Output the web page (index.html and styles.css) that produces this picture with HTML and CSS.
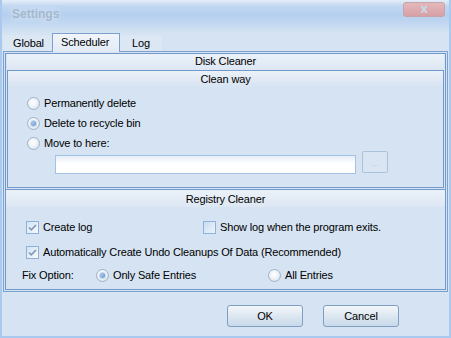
FILE: index.html
```html
<!DOCTYPE html>
<html lang="en">
<head>
    <meta charset="UTF-8">
    <title>Settings</title>
    <link rel="stylesheet" href="styles.css">
</head>
<body>

<div class="window">
    <div class="titlebar">
        <span class="title">Settings</span>
        <span class="close-btn">x</span>
    </div>

    <div class="tabs">
        <span class="tab tab-global">Global</span>
        <span class="tab tab-active">Scheduler</span>
        <span class="tab tab-log">Log</span>
    </div>

    <div class="tab-panel">
        <div class="group disk-group">
            <div class="group-header">Disk Cleaner</div>
            <div class="subgroup">
                <div class="group-header sub-header">Clean way</div>
                <div class="clean-body">
                    <div class="row">
                        <span class="radio"></span>
                        <span class="label">Permanently delete</span>
                    </div>
                    <div class="row">
                        <span class="radio checked"></span>
                        <span class="label">Delete to recycle bin</span>
                    </div>
                    <div class="row">
                        <span class="radio"></span>
                        <span class="label">Move to here:</span>
                    </div>
                    <div class="path-row">
                        <span class="path-input"></span>
                        <span class="browse-btn">...</span>
                    </div>
                </div>
            </div>
        </div>

        <div class="group registry-group">
            <div class="group-header">Registry Cleaner</div>
            <div class="registry-body">
                <div class="row check-row">
                    <span class="cell-first">
                        <span class="checkbox">
                            <svg width="11" height="11" viewBox="0 0 11 11"><path d="M2 5.5 L4.3 7.8 L9 3" fill="none" stroke="#7f98b4" stroke-width="1.6"/></svg>
                        </span>
                        <span class="label">Create log</span>
                    </span>
                    <span class="checkbox empty"></span>
                    <span class="label">Show log when the program exits.</span>
                </div>
                <div class="row check-row row-second">
                    <span class="checkbox">
                        <svg width="11" height="11" viewBox="0 0 11 11"><path d="M2 5.5 L4.3 7.8 L9 3" fill="none" stroke="#7f98b4" stroke-width="1.6"/></svg>
                    </span>
                    <span class="label">Automatically Create Undo Cleanups Of Data (Recommended)</span>
                </div>
                <div class="row fix-row">
                    <span class="fix-label">Fix Option:</span>
                    <span class="fix-option">
                        <span class="radio checked"></span>
                        <span class="label">Only Safe Entries</span>
                    </span>
                    <span class="radio"></span>
                    <span class="label">All Entries</span>
                </div>
            </div>
        </div>
    </div>

    <div class="buttons">
        <span class="button">OK</span>
        <span class="button">Cancel</span>
    </div>
</div>

</body>
</html>
```

FILE: styles.css
```css
body {
    margin: 0;
    font-family: 'Liberation Sans', Arial, sans-serif;
    font-size: 11px;
    letter-spacing: -0.15px;
    color: #000;
    background: #d5e3f2;
}

.window {
    width: 451px;
    height: 338px;
    box-sizing: border-box;
    border: 2px solid #a9c9ee;
    border-top: none;
    background: #d5e3f2;
    display: flex;
    flex-direction: column;
    overflow: hidden;
}

/* title bar */
.titlebar {
    height: 33px;
    flex-shrink: 0;
    display: flex;
    justify-content: space-between;
    align-items: flex-start;
    padding: 0 4px 0 10px;
    background: linear-gradient(#e6eef9 0%, #c2d8f1 18%, #b4cfee 45%, #c4d9f1 75%, #d5e3f2 100%);
}

.title {
    margin-top: 7px;
    font-size: 12px;
    font-weight: bold;
    letter-spacing: 0;
    color: #a6b8cc;
    text-shadow: 0 0 6px #e8f0f8;
}

.close-btn {
    margin-top: 2px;
    width: 42px;
    height: 15px;
    box-sizing: border-box;
    border: 1px solid #c7a3ab;
    border-radius: 3px;
    background: linear-gradient(#e3b9bc, #d6a0a5);
    color: #c9dcef;
    font-size: 13px;
    font-weight: bold;
    line-height: 12px;
    text-align: center;
}

/* tabs */
.tabs {
    height: 18px;
    flex-shrink: 0;
    display: flex;
    align-items: flex-end;
    padding-left: 1px;
}

.tab {
    height: 16px;
    box-sizing: border-box;
    background: #dce7f4;
    line-height: 17px;
}

.tab-global {
    width: 49px;
    padding-left: 10px;
}

.tab-log {
    width: 42px;
    padding-left: 12px;
}

.tab-active {
    height: 19px;
    width: 68px;
    margin-bottom: -1px;
    position: relative;
    border: 1px solid #7ca1cf;
    border-bottom: none;
    background: linear-gradient(#f0f5fb, #e2eaf4);
    padding-left: 8px;
    line-height: 16px;
}

/* tab panel */
.tab-panel {
    height: 241px;
    box-sizing: border-box;
    flex-shrink: 0;
    margin: 0 1px;
    border: 1px solid #7ca1cf;
    padding: 1px;
    display: flex;
    flex-direction: column;
}

.group {
    border: 1px solid #7199cc;
    display: flex;
    flex-direction: column;
}

.disk-group {
    height: 137px;
    box-sizing: border-box;
    padding: 0 1px 1px;
}

.registry-group {
    flex: 1;
    border-top: none;
}

.group-header {
    height: 16px;
    line-height: 15px;
    text-align: center;
    background: linear-gradient(#ebf1f8, #dde7f3);
}

.registry-group .group-header {
    height: 17px;
    line-height: 18px;
}

.subgroup {
    flex: 1;
    border: 1px solid #7199cc;
    display: flex;
    flex-direction: column;
}

.sub-header {
    height: 17px;
    line-height: 16px;
    background: linear-gradient(#ebf1f8 0%, #dfe8f4 60%, #d5e3f2 100%);
}

.row {
    height: 20px;
    display: flex;
    align-items: center;
}

.label {
    margin-left: 4px;
    white-space: nowrap;
}

/* clean way */
.clean-body {
    padding: 5px 0 0 19px;
}

.path-row {
    display: flex;
    align-items: flex-start;
    margin-top: -2px;
}

.path-input {
    width: 301px;
    height: 19px;
    box-sizing: border-box;
    margin: 4px 0 0 28px;
    border: 1px solid #a3c3e6;
    background: linear-gradient(#e6eef8, #ffffff 45%, #ffffff);
}

.browse-btn {
    width: 26px;
    height: 22px;
    box-sizing: border-box;
    margin-left: 6px;
    border: 1px solid #a9c2dc;
    border-radius: 2px;
    background: #d9e5f2;
    color: #b9cde2;
    font-size: 9px;
    text-align: center;
    line-height: 22px;
}

/* radio / checkbox */
.radio {
    width: 13px;
    height: 13px;
    box-sizing: border-box;
    border-radius: 50%;
    border: 1px solid #9fb3c8;
    background: radial-gradient(circle at 45% 40%, #ffffff 0%, #eef3f8 45%, #cad8e6 100%);
    display: flex;
    align-items: center;
    justify-content: center;
    flex-shrink: 0;
}

.radio.checked::after {
    content: "";
    width: 5px;
    height: 5px;
    border-radius: 50%;
    background: radial-gradient(circle at 40% 40%, #a9c8ea, #5a8cc6);
    box-shadow: 0 0 0 1px #c6d9ee;
}

.checkbox {
    width: 13px;
    height: 13px;
    box-sizing: border-box;
    border: 1px solid #8fb0d8;
    background: linear-gradient(135deg, #d5e4f3, #f5f9fc);
    display: flex;
    align-items: center;
    justify-content: center;
    flex-shrink: 0;
}

.checkbox.empty {
    background: linear-gradient(135deg, #c9dcf0, #eef4fa);
}

/* registry */
.registry-body {
    padding: 10px 0 0 16px;
}

.check-row {
    padding-left: 4px;
}

.cell-first {
    width: 177px;
    display: flex;
    align-items: center;
}

.row-second {
    margin-top: 5px;
}

.fix-row {
    margin-top: 3px;
}

.fix-label {
    width: 74px;
    white-space: nowrap;
}

.fix-option {
    width: 172px;
    display: flex;
    align-items: center;
}

/* bottom buttons */
.buttons {
    display: flex;
    justify-content: flex-end;
    gap: 20px;
    padding: 13px 50px 0 0;
}

.button {
    width: 76px;
    height: 22px;
    box-sizing: border-box;
    border: 1px solid #7f9fc0;
    border-radius: 3px;
    background: linear-gradient(#f3f6fa 0%, #dde7f1 50%, #c9d9ea 100%);
    text-align: center;
    line-height: 20px;
}
```
